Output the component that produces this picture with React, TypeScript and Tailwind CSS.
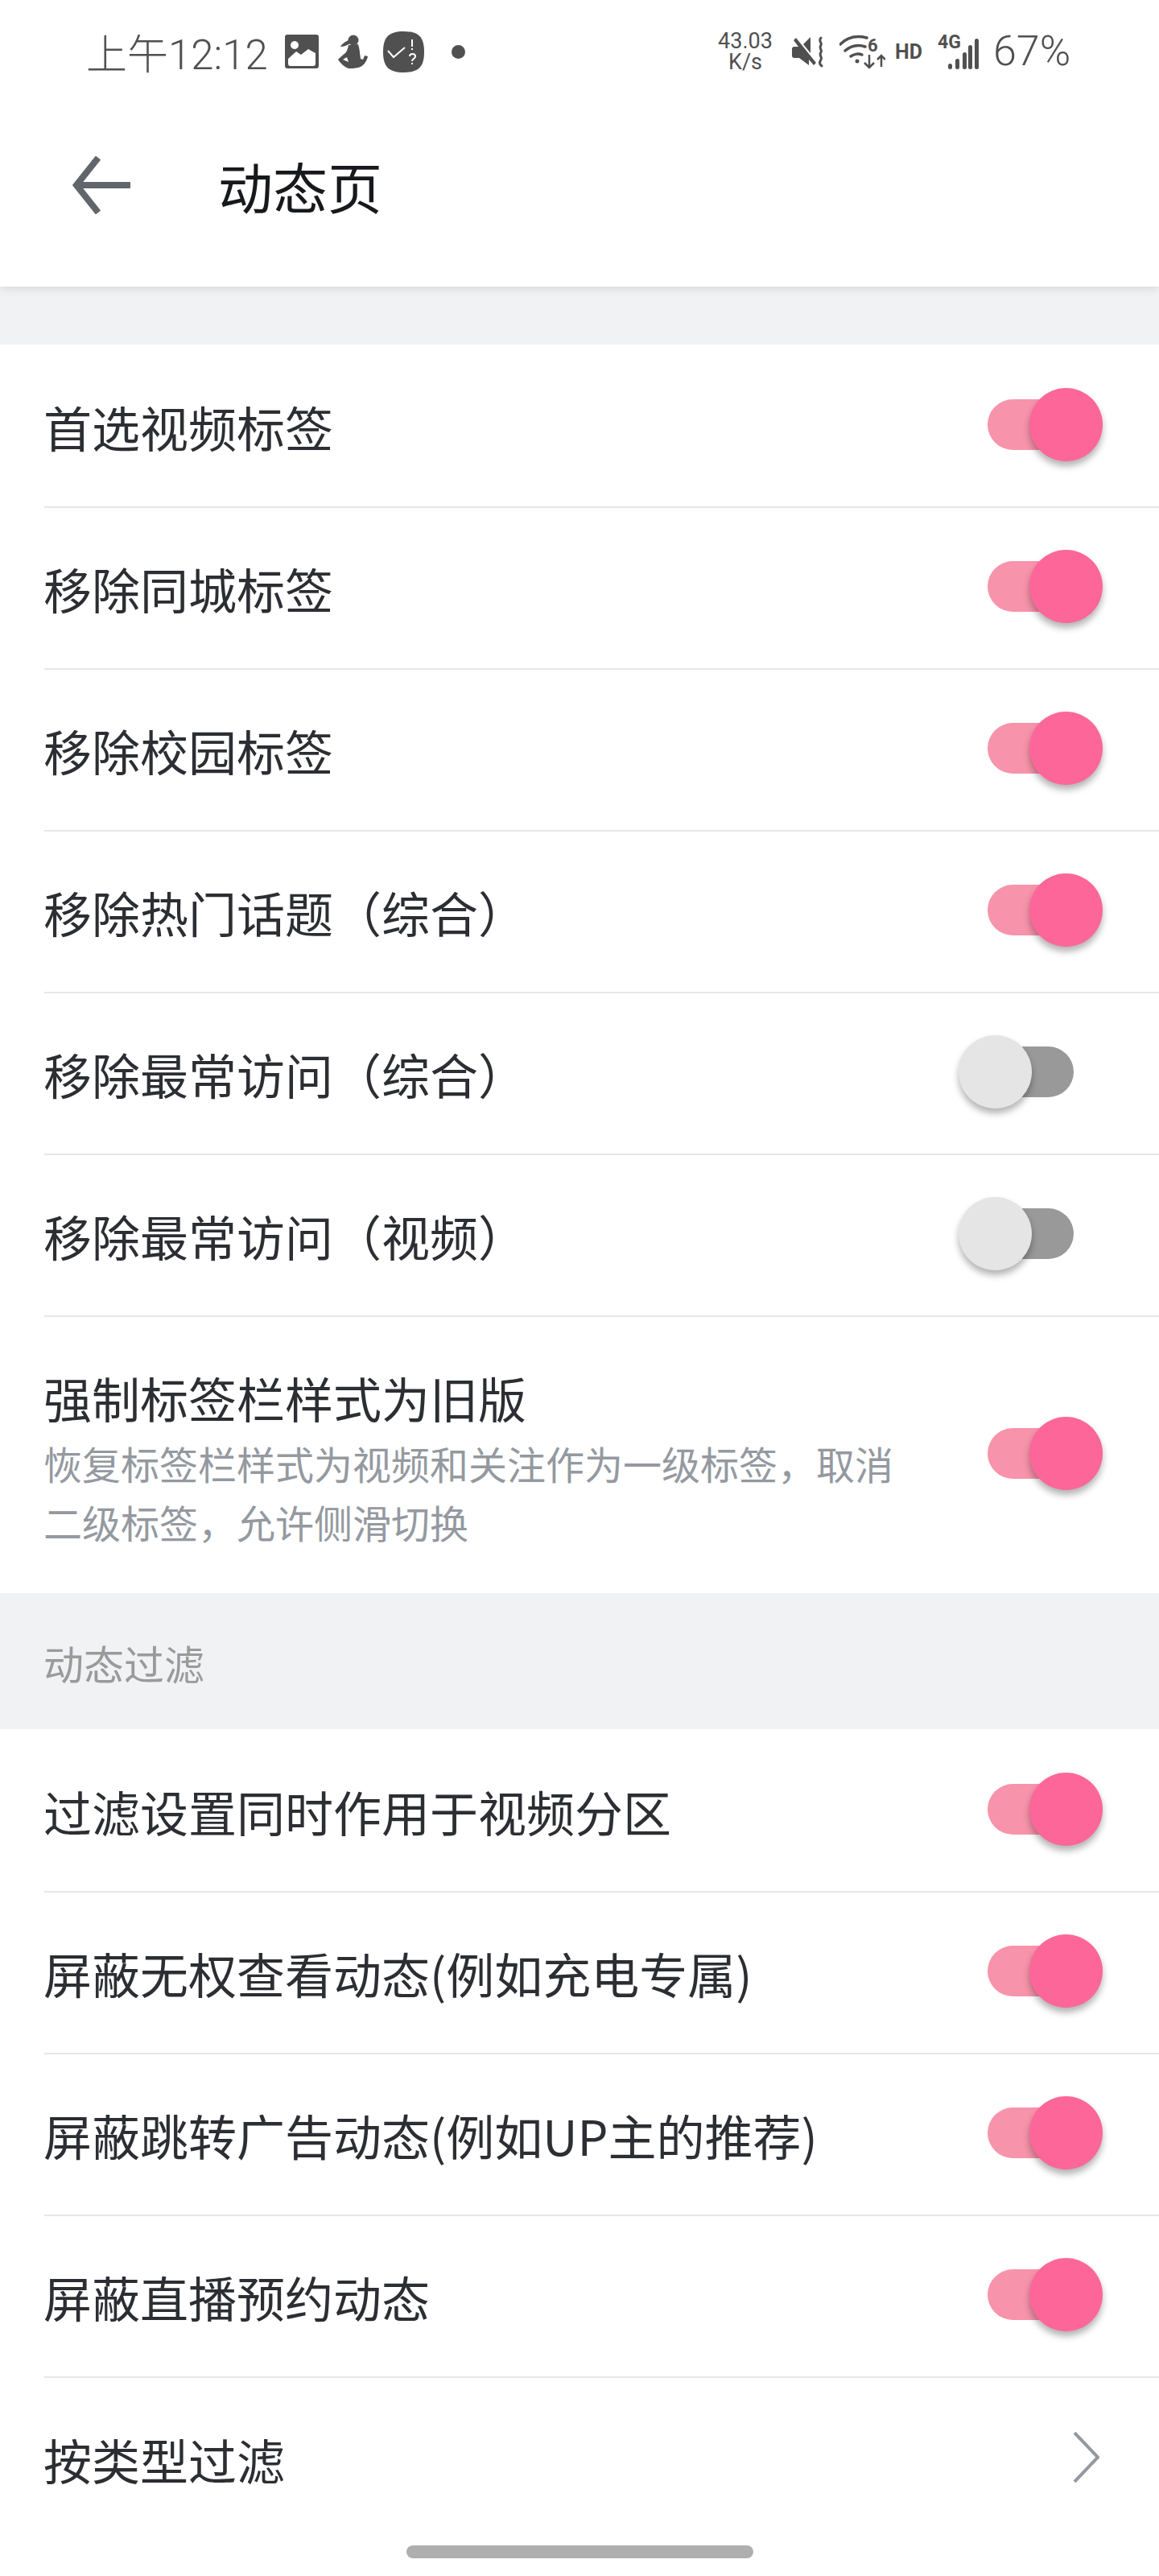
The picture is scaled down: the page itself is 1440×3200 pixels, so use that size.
import React from 'react';

const Toggle = ({ on }: { on: boolean }) => (
  <div className="relative flex h-[91px] w-[179px] shrink-0 -translate-y-[2px] items-center justify-center">
    <div className={`h-[63px] w-[107px] rounded-full ${on ? 'bg-[#f793aa]' : 'bg-[#999999]'}`} />
    <div
      className={`absolute top-0 h-[91px] w-[91px] rounded-full shadow-[0_6px_9px_rgba(0,0,0,0.3)] ${
        on ? 'right-0 bg-[#fd6699]' : 'left-0 bg-[#e5e5e5]'
      }`}
    />
  </div>
);

const Row = ({ title, on }: { title: string; on: boolean }) => (
  <div className="ml-[55px] flex h-[201px] items-center justify-between border-b-2 border-[#e7e7e7] pr-[70px]">
    <span className="-translate-x-[1px] text-[60px] leading-none text-[#2c2e33]">{title}</span>
    <Toggle on={on} />
  </div>
);

const StatusBar = () => (
  <div className="flex h-[128px] items-center justify-between pl-[107px] pr-[114px] font-['Roboto','Noto_Sans_CJK_SC',sans-serif] text-[#505050]">
    <div className="flex items-center">
      <span className="w-[231px] translate-y-[4px] whitespace-nowrap text-[51px] font-light leading-none">上午12:12</span>
      <svg viewBox="0 0 42 42" className="ml-[16px] h-[42px] w-[42px]">
        <path fill="currentColor" fillRule="evenodd" d="M3 0h36a3 3 0 0 1 3 3v36a3 3 0 0 1-3 3H3a3 3 0 0 1-3-3V3a3 3 0 0 1 3-3ZM12 8a5 5 0 1 0 .01 0ZM4 36a3 3 0 0 0 3 3h28a3 3 0 0 0 3-3V23l-9-5-9 7-6-4-10 9Z" />
      </svg>
      <svg viewBox="0 0 38 42" className="ml-[24px] h-[42px] w-[38px]">
        <circle cx="19" cy="7" r="6.500" fill="currentColor" />
        <path fill="currentColor" d="M15 6C10 8 5 11 3 15c4 0 9-2 12-4Z" />
        <path fill="currentColor" d="M13 13l12-1c2 6 2 12 3 18l3 1 2-5 4 1c-1 6-6 13-12 14-4 1-9 1-12 1-5-2-10-6-13-11 3-3 6-6 9-8 1-1 3-4 4-10Z" />
        <path fill="#fff" d="M6 31l5-3 2 6Z" />
      </svg>
      <svg viewBox="0 0 51 51" className="ml-[18px] h-[51px] w-[51px]">
        <path fill="currentColor" d="M25.500 0C44 0 51 7 51 25.500S44 51 25.500 51 0 44 0 25.500 7 0 25.500 0Z" />
        <path fill="none" stroke="#fff" strokeWidth="2" d="M6 24l7 8 14-12" />
        <path fill="none" stroke="#fff" strokeWidth="2" d="M36 10v9M36 21v2" />
        <path fill="none" stroke="#fff" strokeWidth="2" d="M33 31c0-4 7-4 7 0 0 3-4 3-4 6M36 39v2" />
      </svg>
      <div className="ml-[34px] h-[17px] w-[17px] rounded-full bg-[#505050]" />
    </div>
    <div className="flex items-center">
      <div className="flex w-[72px] flex-col items-center text-[27px] leading-[26px]">
        <span>43.03</span>
        <span>K/s</span>
      </div>
      <svg viewBox="0 0 40 40" className="ml-[22px] h-[40px] w-[40px]">
        <path fill="currentColor" d="M0 17c0-2 1-3 3-3h5L2 6l3-3 25 31-3 3-6-7v7L9 28H3c-2 0-3-1-3-3Z" />
        <path fill="currentColor" d="M23 2v20l-9-11Z" />
        <path fill="none" stroke="currentColor" strokeWidth="3" strokeLinecap="round" d="M36 3c-4 4 2 6 0 9-3 4 2 6 0 9-3 3 2 6 0 9-2 3-2 6 1 8" />
      </svg>
      <svg viewBox="0 0 57 43" className="ml-[19px] h-[43px] w-[57px]">
        <g fill="none" stroke="currentColor" strokeWidth="3.500" strokeLinecap="round">
          <path d="M1 12C10 3 22 1 34 4" />
          <path d="M7 20c7-6 16-8 25-5" />
          <path d="M14 27c4-3 10-4 14-2" />
        </g>
        <circle cx="22" cy="33" r="2.500" fill="currentColor" />
        <text x="35" y="21" fontSize="22" fontWeight="700" fontFamily="Roboto" fill="currentColor">6</text>
        <path fill="none" stroke="currentColor" strokeWidth="2.500" d="M37 25v16M31 35l6 6 6-6M52 40V26M47 31l5-5 5 5" />
      </svg>
      <span className="ml-[12px] w-[36px] text-[25px] font-bold leading-none">HD</span>
      <svg viewBox="0 0 51 43" className="ml-[17px] h-[43px] w-[51px] overflow-visible">
        <text x="0" y="17" fontSize="23" fontWeight="700" fontFamily="Roboto" fill="currentColor">4G</text>
        <g fill="currentColor">
          <rect x="13" y="36" width="5" height="7" rx="2.500" />
          <rect x="22" y="30" width="5" height="13" rx="2.500" />
          <rect x="31" y="22" width="5" height="21" rx="2.500" />
          <rect x="38" y="13" width="5" height="30" rx="2.500" />
          <rect x="46" y="5" width="5" height="38" rx="2.500" />
        </g>
      </svg>
      <span className="ml-[18px] w-[92px] whitespace-nowrap text-[52px] font-light leading-none">67%</span>
    </div>
  </div>
);

const App: React.FC = () => {
  return (
    <div className="flex h-[3200px] w-[1440px] flex-col overflow-hidden bg-white font-['Noto_Sans_CJK_SC',sans-serif]">
      <div className="relative z-10 h-[356px] bg-white shadow-[0_2px_12px_rgba(0,0,0,0.12)]">
        <StatusBar />
        <div className="flex h-[228px] items-start pl-[90px] pt-[66px]">
          <svg viewBox="0 0 72 72" className="h-[72px] w-[72px] text-[#61666d]">
            <path fill="none" stroke="currentColor" strokeWidth="8" d="M32 2L5 36l27 34M5 36h67" />
          </svg>
          <span className="ml-[109px] mt-[1px] text-[68px] leading-[72px] text-[#18191c]">动态页</span>
        </div>
      </div>

      <div className="h-[72px] bg-[#f1f2f3]" />

      <div className="pt-[2px]">
        <Row title="首选视频标签" on />
        <Row title="移除同城标签" on />
        <Row title="移除校园标签" on />
        <Row title="移除热门话题（综合）" on />
        <Row title="移除最常访问（综合）" on={false} />
        <Row title="移除最常访问（视频）" on={false} />

        <div className="ml-[55px] flex h-[343px] items-center justify-between pr-[70px]">
          <div className="w-[1060px] -translate-x-[1px] translate-y-[5px]">
            <div className="text-[60px] leading-[74px] text-[#2c2e33]">强制标签栏样式为旧版</div>
            <div className="mt-[8px] text-[48px] leading-[73px] text-[#9499a0]">恢复标签栏样式为视频和关注作为一级标签，取消二级标签，允许侧滑切换</div>
          </div>
          <Toggle on />
        </div>
      </div>

      <div className="flex h-[169px] items-center bg-[#f1f2f3] pl-[54px] pt-[4px] text-[50px] text-[#9a9a9a]">动态过滤</div>

      <div className="pt-[2px]">
        <Row title="过滤设置同时作用于视频分区" on />
        <Row title="屏蔽无权查看动态(例如充电专属)" on />
        <Row title="屏蔽跳转广告动态(例如UP主的推荐)" on />
        <Row title="屏蔽直播预约动态" on />

        <div className="ml-[55px] flex h-[201px] items-center justify-between pr-[74px]">
          <span className="-translate-x-[1px] text-[60px] leading-none text-[#2c2e33]">按类型过滤</span>
          <svg viewBox="0 0 33 63" className="h-[63px] w-[33px] -translate-y-[2px] text-[#9499a0]">
            <path fill="none" stroke="currentColor" strokeWidth="4" d="M2 1l29 30.500L2 62" />
          </svg>
        </div>
      </div>

      <div className="mx-auto mt-[7px] h-[16px] w-[431px] rounded-full bg-[#afafaf]" />
    </div>
  );
};

export default App;
